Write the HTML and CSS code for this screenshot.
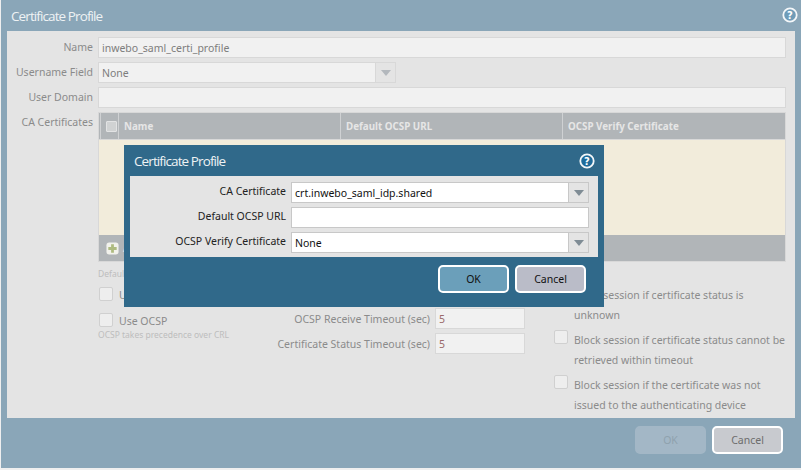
FILE: index.html
```html
<!DOCTYPE html>
<html lang="en">
<head>
<meta charset="utf-8">
<title>Certificate Profile</title>
<link rel="stylesheet" href="styles.css">
</head>
<body>
<div class="window">
  <div class="titlebar">
    <span class="title">Certificate Profile</span>
    <svg class="help" viewBox="0 0 16 16"><circle cx="8" cy="8" r="6.7" fill="#6f9cb8" stroke="#f4f7f9" stroke-width="1.8"/><text x="8" y="11.6" text-anchor="middle" class="q">?</text></svg>
  </div>
  <div class="panel">
    <div class="row"><label class="lbl">Name</label><div class="input grow">inwebo_saml_certi_profile</div></div>
    <div class="row"><label class="lbl">Username Field</label><div class="select"><div class="input grow">None</div><div class="arrow"><i class="tri"></i></div></div></div>
    <div class="row"><label class="lbl">User Domain</label><div class="input grow"></div></div>
    <div class="row top"><label class="lbl">CA Certificates</label>
      <div class="table">
        <div class="thead">
          <div class="th chk"><i class="cb small"></i></div>
          <div class="th c1">Name</div>
          <div class="th c2">Default OCSP URL</div>
          <div class="th c3">OCSP Verify Certificate</div>
        </div>
        <div class="tbody"></div>
        <div class="tfoot"><svg class="plus" viewBox="0 0 14 14"><rect x="0.5" y="0.5" width="13" height="13" rx="3" fill="#f2f2ec"/><path d="M7 2.5v9M2.5 7h9" stroke="#aebb80" stroke-width="3"/></svg><span class="add">Add</span></div>
      </div>
    </div>
    <div class="options">
      <div class="col-left">
        <div class="hint first">Default OCSP URL (must start with http:// or https://)</div>
        <div class="check"><i class="cb"></i><span>Use CRL</span></div>
        <div class="check second"><i class="cb"></i><span>Use OCSP</span></div>
        <div class="hint below">OCSP takes precedence over CRL</div>
      </div>
      <div class="col-mid">
        <div class="mrow"><label>CRL Receive Timeout (sec)</label><div class="input num">5</div></div>
        <div class="mrow"><label>OCSP Receive Timeout (sec)</label><div class="input num">5</div></div>
        <div class="mrow"><label>Certificate Status Timeout (sec)</label><div class="input num">5</div></div>
      </div>
      <div class="col-right">
        <div class="block"><i class="cb"></i><span>Block session if certificate status is unknown</span></div>
        <div class="block"><i class="cb"></i><span>Block session if certificate status cannot be retrieved within timeout</span></div>
        <div class="block"><i class="cb"></i><span>Block session if the certificate was not issued to the authenticating device</span></div>
      </div>
    </div>
  </div>
  <div class="footer">
    <button class="btn disabled">OK</button>
    <button class="btn cancel-outer">Cancel</button>
  </div>
</div>

<div class="modal">
  <div class="modal-title">
    <span class="title">Certificate Profile</span>
    <svg class="help" viewBox="0 0 16 16"><circle cx="8" cy="8" r="6.7" fill="#1f6b9a" stroke="#f4f7f9" stroke-width="1.8"/><text x="8" y="11.6" text-anchor="middle" class="q">?</text></svg>
  </div>
  <div class="modal-body">
    <div class="mfield"><label>CA Certificate</label><div class="select"><div class="input white grow">crt.inwebo_saml_idp.shared</div><div class="arrow strong"><i class="tri"></i></div></div></div>
    <div class="mfield"><label>Default OCSP URL</label><div class="input white grow"></div></div>
    <div class="mfield"><label>OCSP Verify Certificate</label><div class="select"><div class="input white grow">None</div><div class="arrow strong"><i class="tri"></i></div></div></div>
  </div>
  <div class="modal-foot">
    <button class="btn ok">OK</button>
    <button class="btn cancel">Cancel</button>
  </div>
</div>
</body>
</html>
```

FILE: styles.css
```css
* { box-sizing: border-box; }
html, body { margin: 0; padding: 0; }
body {
  width: 801px; height: 470px; overflow: hidden; position: relative;
  background: #efefef;
  font-family: "Noto Sans", sans-serif;
  font-size: 10.5px;
  color: #8b8b8b;
}
.window {
  margin-left: 1px; height: 468px; width: 800px;
  background: #8aa6b8;
  display: flex; flex-direction: column;
}
.titlebar {
  height: 31px; flex: none;
  display: flex; align-items: center; justify-content: space-between;
  padding: 0 2px 0 10px;
  color: #eef2f4;
}
.titlebar .help { margin-right: 1px; margin-top: -1px; }
.title { font-family: "Open Sans", sans-serif; font-size: 13.5px; letter-spacing: -0.9px; }
.help { width: 16px; height: 16px; display: block; }
.q { font: bold 10px "DejaVu Sans", sans-serif; fill: #fff; }
.panel {
  margin-left: 6px; width: 788px; height: 387px; flex: none;
  background: #e4e4e4;
  padding: 6px 9px 0 0;
  display: flex; flex-direction: column;
}
.row { display: flex; height: 21px; margin-bottom: 4px; }
.row.top { height: auto; margin-bottom: 0; }
.lbl { width: 86px; margin-right: 5px; text-align: right; line-height: 20px; flex: none; white-space: nowrap; }
.input {
  height: 21px; background: #f1f1f1; border: 1px solid #d8d8d8;
  line-height: 20px; padding-left: 3px; color: #7d7d7d; white-space: nowrap;
}
.grow { flex: 1; min-width: 0; }
.select { display: flex; width: 298px; }
.arrow {
  width: 20px; flex: none; border: 1px solid #d8d8d8; border-left: 0;
  background: #e4e4e4;
  display: flex; align-items: center; justify-content: center;
}
.tri {
  width: 0; height: 0; display: block;
  border-left: 5.5px solid transparent; border-right: 5.5px solid transparent;
  border-top: 6px solid #b3b8bd;
}
.table { flex: 1; border: 1px solid #d8d8d8; display: flex; flex-direction: column; background: #b1b5b8; }
.thead { display: flex; height: 27px; flex: none; border-bottom: 1px solid #d8d8d8; }
.th {
  border-right: 1px solid #cfd1d3; color: #e6e6e6; font-weight: bold; font-size: 9.8px;
  line-height: 28px; padding-left: 5px; white-space: nowrap; overflow: hidden;
}
.th.chk { width: 19px; padding: 8px 0 0 5px; border-left: 1px solid #cfd1d3; margin-left: 1px; flex: none; }
.th.c1 { width: 222px; }
.th.c2 { width: 222px; }
.th.c3 { flex: 1; border-right: 0; }
.tbody { height: 95px; background: #f2ecdb; flex: none; }
.tfoot { height: 26px; flex: none; display: flex; align-items: center; padding-left: 7px; color: #e6e6e6; }
.plus { width: 13px; height: 13px; margin-right: 4px; }
.cb {
  display: block; width: 14px; height: 14px; flex: none;
  background: #eeeeee; border: 1px solid #d0d0d0; border-radius: 2px;
}
.th .cb.small { width: 11px; height: 11px; background: #d0d2d3; border-color: #e2e3e4; border-radius: 1px; }
.options { margin-left: 91px; display: flex; }
.col-left { width: 165px; flex: none; padding-top: 6px; }
.hint { font-size: 8.5px; color: #bdbdbd; line-height: 12px; white-space: nowrap; }
.hint.below { margin-top: 2px; }
.check { display: flex; align-items: center; gap: 6px; margin: 7px 0 0 1px; height: 14px; }
.check span { position: relative; top: 1px; }
.check.second { margin-top: 12px; }
.col-mid { width: 262px; flex: none; padding-top: 21px; }
.mrow { display: flex; justify-content: flex-end; align-items: center; gap: 5px; height: 21px; margin-bottom: 4px; white-space: nowrap; }
.num { width: 90px; color: #9b6a6a; flex: none; }
.col-right { flex: 1; padding: 23px 0 0 29px; }
.block { display: flex; gap: 6px; line-height: 20px; margin-bottom: 5px; }
.footer { flex: 1; display: flex; justify-content: flex-end; align-items: flex-start; gap: 6px; padding: 8px 18px 0 0; }
.btn {
  width: 71px; height: 28px; border-radius: 5px;
  font-family: "Noto Sans", sans-serif; font-size: 10.5px;
  padding: 0; border: 2px solid #fff;
  color: #111;
}
.btn.disabled { background: #a3b7c6; border-color: #a3b7c6; color: #8fa2ae; }
.btn.cancel-outer { background: #c8cacf; color: #6d6d6d; }
.btn.ok { background: #6b9fba; }
.btn.cancel { background: #babcc8; }
.modal {
  position: absolute; left: 124px; top: 145px; width: 480px; height: 162px;
  background: #30698a; padding: 0 6px;
  display: flex; flex-direction: column;
}
.modal-title {
  height: 31px; flex: none; display: flex; align-items: center; justify-content: space-between;
  padding: 0 3px 0 4px; color: #eef2f4;
}
.modal-body {
  height: 81px; flex: none; background: #e4e4e4;
  padding: 6px 9px 0 0;
}
.mfield { display: flex; height: 21px; margin-bottom: 4px; color: #222; }
.mfield label { width: 156px; margin-right: 5px; text-align: right; line-height: 19px; flex: none; white-space: nowrap; }
.mfield .select { flex: 1; width: auto; }
.white { background: #fff; border-color: #c8c8c8; color: #111; }
.arrow.strong { border-color: #c8c8c8; }
.arrow.strong .tri { border-top-color: #7f8c95; }
.modal-foot { flex: 1; display: flex; justify-content: flex-end; gap: 6px; padding: 8px 12px 0 0; }
```
